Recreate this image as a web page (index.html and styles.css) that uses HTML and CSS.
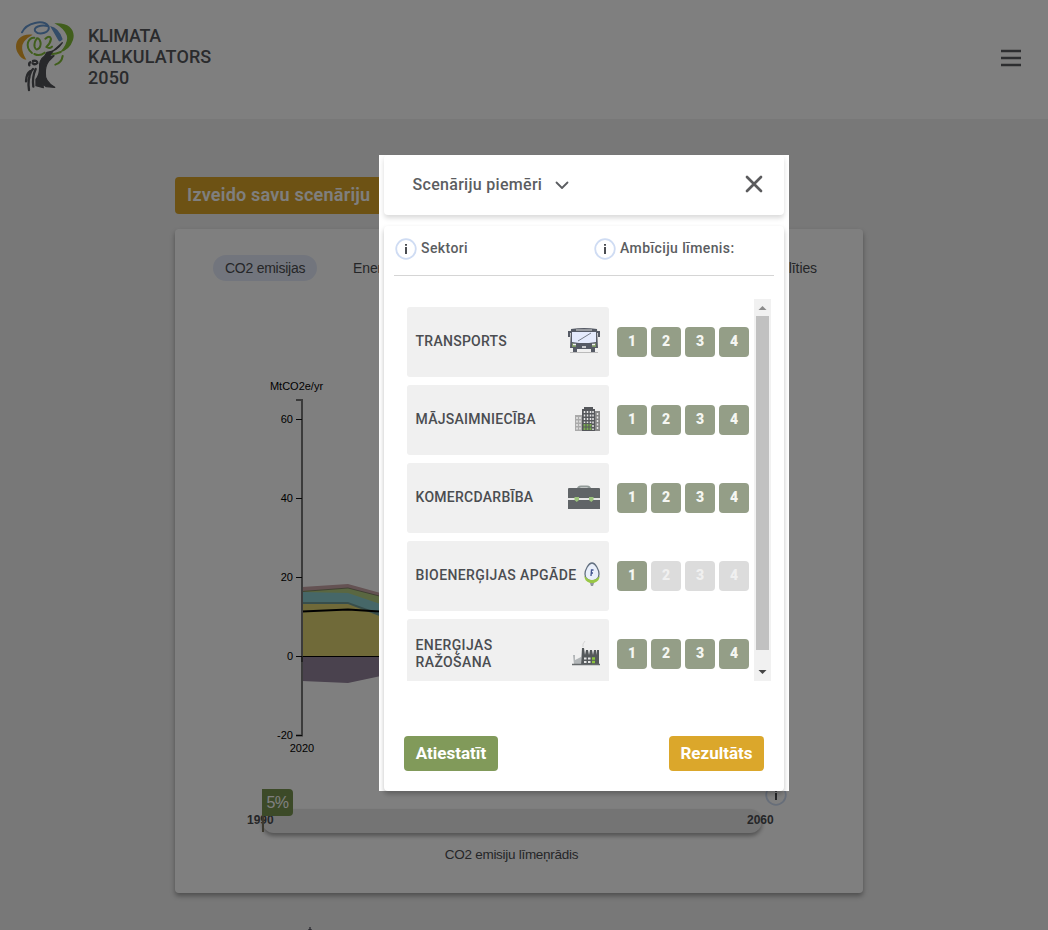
FILE: index.html
```html
<!DOCTYPE html>
<html lang="lv">
<head>
<meta charset="utf-8">
<title>Klimata kalkulators 2050</title>
<link rel="stylesheet" href="styles.css">
</head>
<body>
<svg class="defs" width="0" height="0">
  <symbol id="info" viewBox="0 0 22 22"><circle cx="11" cy="11" r="9.8" fill="#fff" stroke="#cfdcf3" stroke-width="1.8"/><path d="M11 9v7M11 6v1.8" stroke="#4b4d51" stroke-width="2"/></symbol>
</svg>
<header class="header">
  <div class="brand">
    <svg class="logo" viewBox="45 60 180 216" fill="none" stroke-linecap="round" stroke-linejoin="round">
      <path d="M66 97C80 67 130 58 145 78C154 98 118 107 106 94C98 82 122 73 143 78" stroke="#6698d1" stroke-width="6"/>
      <path d="M150 78Q178 84 188 118Q178 130 174 119Q164 102 150 78Z" fill="#6698d1"/>
      <path d="M163 70C207 66 228 91 219 120Q209 150 180 157Q207 126 200 106Q191 84 163 70Z" fill="#82bd38"/>
      <path d="M98 104C52 98 38 137 55 161Q64 178 79 179Q58 145 72 125Q82 112 98 104Z" fill="#e7a52d"/>
      <path d="M103 113Q90 112 84 127Q79 146 96 159M111 115Q101 127 104 141Q108 153 117 145Q126 134 119 120Q115 114 111 115M136 116Q150 104 153 117Q151 130 139 141Q148 147 156 140M103 162Q120 170 134 158M188 168Q185 188 166 194M182 156Q162 164 150 161" stroke="#82bd38" stroke-width="6"/>
      <path d="M187 128Q170 155 141 157L134 168Q117 180 119 203Q119 225 108 238V257L130 263L128 251L139 260L164 262Q133 243 136 220Q135 198 147 182L162 167L146 171L160 152Z" fill="#515257" stroke="#515257" stroke-width="4"/>
      <path d="M99 183Q112 180 112 189Q105 196 98 190M91 187Q86 190 88 196M99 207Q88 218 88 233M107 207Q96 232 100 260M94 212Q82 238 87 270M90 214Q79 221 78 244" stroke="#515257" stroke-width="7"/>
    </svg>
    <div class="brand-name"><span class="narrow">KLIMATA</span><br>KALKULATORS<br>2050</div>
  </div>
  <svg class="burger" viewBox="0 0 22 18"><path d="M1 2h20M1 9h20M1 16h20" stroke="#5b5d61" stroke-width="2.300"/></svg>
</header>
<main class="main">
  <button class="create">Izveido savu scenāriju</button>
  <section class="card">
    <nav class="tabs"><span class="tab active">CO2 emisijas</span><span class="tab">Enerģija</span><span class="tab last">Dalīties</span></nav>
    <svg class="chart" viewBox="260 375 510 385">
      <path d="M302 587L348 584L395 597V656H302Z" fill="#c9a5a6"/>
      <path d="M302 591L348 588L395 600V656H302Z" fill="#b4cf82"/>
      <path d="M302 592L348 593L395 609V656H302Z" fill="#8dced1"/>
      <path d="M302 602L348 602L395 619V656H302Z" fill="#719d97"/>
      <path d="M302 604L348 604L395 622V656H302Z" fill="#e0d573"/>
      <path d="M302 657H395V673L348 683L302 681Z" fill="#95849c"/>
      <path d="M302 591.5L348 588L395 600" fill="none" stroke="#665" stroke-width=".7"/>
      <path d="M302 611.5L348 609.5L395 612.5" fill="none" stroke="#000" stroke-width="2"/>
      <path d="M302 656.5H395" stroke="#000"/>
      <path d="M296 400H302V735.500H296" fill="none" stroke="#777" stroke-width="2"/>
      <path d="M296 419.500h6M296 498.500h6M296 577.500h6M296 656.500h6M296 735.500h6M302 656v6" stroke="#111"/>
      <g class="ticks"><text x="293" y="423">60</text><text x="293" y="502">40</text><text x="293" y="581">20</text><text x="293" y="660">0</text><text x="293" y="739">-20</text></g>
      <g class="labels"><text x="296.500" y="390">MtCO2e/yr</text><text x="302" y="752">2020</text></g>
    </svg>
    <div class="level">
      <svg class="level-info"><use href="#info"/></svg>
      <span class="year">1990</span>
      <div class="track"></div>
      <span class="year end">2060</span>
      <i class="needle"></i><span class="percent">5%</span>
    </div>
    <p class="caption">CO2 emisiju līmeņrādis</p>
  </section>
  <svg class="peak" viewBox="0 0 6 4"><path d="M3 0v4M1 3h4" stroke="#223" stroke-width="1"/></svg>
</main>
<div class="overlay">
  <div class="modal">
    <div class="modal-head">
      <span class="examples">Scenāriju piemēri</span>
      <svg class="chevron" viewBox="0 0 14 9"><path d="M1.500 1.500L7 7L12.500 1.500" fill="none" stroke="#5b5d61" stroke-width="1.800" stroke-linecap="round" stroke-linejoin="round"/></svg>
      <svg class="close" viewBox="0 0 18 18"><path d="M2 2L16 16M16 2L2 16" stroke="#5b5b5d" stroke-width="2.700" stroke-linecap="round"/></svg>
    </div>
    <div class="modal-body">
      <div class="columns">
        <div class="column sectors"><svg class="info"><use href="#info"/></svg><span>Sektori</span></div>
        <div class="column"><svg class="info"><use href="#info"/></svg><span>Ambīciju līmenis:</span></div>
      </div>
      <div class="scroller">
        <div class="list">
          <div class="row"><div class="sector"><span>TRANSPORTS</span>
            <svg width="32" height="26" viewBox="0 0 32 26"><path d="M3 1Q16-1 29 1L30 20H27V24H23V21H9V24H5V20H2Z" fill="#555a65"/><path d="M8 1.500H24V2.500H8Z" fill="#ddd"/><path d="M4 4H28V14L21 15H11L4 14Z" fill="#e4eafc"/><path d="M10 13L23 5" stroke="#777d89" fill="none"/><path d="M4 15L8 17V19H4ZM28 15L24 17V19H28Z" fill="#7d9865"/><path d="M5 16.500h3M24 16.500h3M14 19h4" stroke="#eee" stroke-width="1.500"/><path d="M3 4H1V9M29 4H31V9" stroke="#555a65" stroke-width="2" fill="none"/><path d="M2 24.500H30" stroke="#bbb"/></svg></div>
            <div class="levels"><b>1</b><b>2</b><b>3</b><b>4</b></div></div>
          <div class="row"><div class="sector"><span>MĀJSAIMNIECĪBA</span>
            <svg width="25" height="25" viewBox="0 0 25 25"><path d="M0 8H7V24H0Z" fill="#aaa"/><path d="M7 2H9V0H18V2H20V24H7Z" fill="#55575b"/><path d="M20 4H25V24H20Z" fill="#888"/><path d="M2 10V23M5 10V23M22.500 6V23" stroke="#e8e8e8" stroke-width="1.500" stroke-dasharray="2 1.500"/><path d="M9.500 4V16M12.500 4V16M15.500 4V16M18 4V23" stroke="#e4e4e4" stroke-width="1.500" stroke-dasharray="2 1.500"/><path d="M9.500 17V24M12.500 17V24M15.500 17V24" stroke="#7aac50" stroke-width="1.900" stroke-dasharray="2.500 1"/></svg></div>
            <div class="levels"><b>1</b><b>2</b><b>3</b><b>4</b></div></div>
          <div class="row"><div class="sector"><span>KOMERCDARBĪBA</span>
            <svg width="32" height="25" viewBox="0 0 32 25"><path d="M10 4Q10 1.500 13 1.500H19Q22 1.500 22 4" fill="none" stroke="#919a98" stroke-width="2"/><path d="M1 3H31Q32 3 32 4V13H0V4Q0 3 1 3ZM0 15H32V24H0Z" fill="#606467"/><path d="M0 14H32" stroke="#ddd"/><path d="M6.500 12H11V15L8.750 17L6.500 15ZM21 12H25.500V15L23.250 17L21 15Z" fill="#9cc37d"/></svg></div>
            <div class="levels"><b>1</b><b>2</b><b>3</b><b>4</b></div></div>
          <div class="row"><div class="sector"><span class="wide">BIOENERĢIJAS APGĀDE</span>
            <svg class="drop" width="16" height="26" viewBox="0 0 16 26"><path d="M8 1C4.500 1 1 8 1 12C1 16 4 19 8 19S15 16 15 12C15 8 11.500 1 8 1Z" fill="#e9effa" stroke="#637080" stroke-width="1.300"/><path d="M.5 14Q4 18 8 18T15.500 14Q16 19 10 21H6Q0 19 .5 14Z" fill="#99c746"/><path d="M6 21H10L9 24H7Z" fill="#90979a"/><path d="M9.500 8H7.500L7 14M7 11H9" stroke="#42548e" stroke-width="1.300" fill="none"/></svg></div>
            <div class="levels disabled"><b>1</b><b>2</b><b>3</b><b>4</b></div></div>
          <div class="row"><div class="sector last-sector"><span class="wide">ENERĢIJAS<br>RAŽOŠANA</span>
            <svg width="28" height="25" viewBox="0 0 28 25"><path d="M1 14H3V19L9 16V24H2Z" fill="#b2b6b8"/><path d="M9 24L10 7H12L13 14L14 9H16L17 14L18 9H20L21 14L22 9H24L25 14L25 9H27L27 24Z" fill="#55595b"/><path d="M11 6Q10 3 13 0" fill="none" stroke="#d4d4d4"/><path d="M12 17.500h7M12 21h7" stroke="#e5e5e5" stroke-width="2.200" stroke-dasharray="2.500 1.500"/><path d="M20 17.500h3M20 21h3" stroke="#8bc43d" stroke-width="2.500"/><path d="M0 23.500H28" stroke="#666a6c" stroke-width="1.500"/></svg></div>
            <div class="levels"><b>1</b><b>2</b><b>3</b><b>4</b></div></div>
        </div>
        <div class="bar">
          <svg class="arrow" viewBox="0 0 17 17"><path d="M4.500 11L8.500 7L12.500 11Z" fill="#8b8b8b"/></svg>
          <div class="thumb"></div>
          <svg class="arrow down" viewBox="0 0 17 17"><path d="M4.500 6L8.500 10L12.500 6Z" fill="#444"/></svg>
        </div>
      </div>
      <div class="actions"><button class="reset">Atiestatīt</button><button class="result">Rezultāts</button></div>
    </div>
  </div>
</div>
</body>
</html>
```
FILE: styles.css
```css
* { box-sizing: border-box; }
html, body { margin: 0; height: 930px; overflow: hidden; }
body { background: #f0f0f0; font-family: Roboto, sans-serif; color: #4b4d51; }
.defs { display: block; width: 0; height: 0; }
svg { flex: none; }
button { border: 0; padding: 0 0 2px; border-radius: 4px; color: #fff; font: 700 17px Roboto, sans-serif; white-space: nowrap; }
.header { height: 119px; background: #fff; display: flex; justify-content: space-between; align-items: flex-start; padding: 20px 26px 0 15px; }
.brand { display: flex; gap: 13px; color: #55575b; }
.logo { width: 60px; height: 72px; }
.brand-name { font-size: 18px; line-height: 21px; font-weight: 500; letter-spacing: .1px; padding-top: 5px; }
.narrow { letter-spacing: -.3px; }
.burger { width: 22px; height: 18px; margin-top: 29px; }
.main { width: 688px; margin: 0 auto 0 175px; padding-top: 58px; }
.create { display: block; width: 270px; height: 37px; background: #daa529; text-align: left; padding-left: 12px; font-size: 18px; font-weight: 600; letter-spacing: .22px; }
.card { height: 664px; margin-top: 15px; background: #fff; border-radius: 4px; box-shadow: 0 3px 5px rgba(0,0,0,.35); padding: 26px 38px 0; font-family: "Liberation Sans", sans-serif; }
.tabs { display: flex; gap: 24px; height: 26px; font-size: 14px; line-height: 26px; padding-right: 8px; white-space: nowrap; }
.tab { padding: 0 12px; letter-spacing: -.1px; }
.tab.active { background: #e5ebfa; border-radius: 13px; width: 104px; letter-spacing: -.25px; }
.tab.last { margin-left: auto; padding: 0; }
.chart { display: block; width: 510px; height: 385px; margin: 94px 0 0 47px; }
.ticks { font-size: 11px; text-anchor: end; fill: #000; }
.labels { font-size: 11px; text-anchor: middle; fill: #000; }
.level { position: relative; height: 60px; margin: 24px 0 0 49px; width: 530px; display: flex; padding-top: 25px; }
.track { height: 24px; width: 500px; background: #e9e9e9; border-radius: 12px; box-shadow: 0 3px 4px rgba(0,0,0,.35); }
.year { position: absolute; left: -15px; top: 29px; font-size: 12px; font-weight: 700; line-height: 14px; }
.year.end { left: 485px; }
.percent { position: absolute; left: 0; top: 5px; width: 31px; height: 27px; border-radius: 0 4px 4px 0; background: #789450; color: #fff; font-size: 16px; line-height: 27px; text-align: center; letter-spacing: -.5px; }
.needle { position: absolute; left: 0; top: 30px; width: 2px; height: 18px; background: #79735d; }
.level-info { position: absolute; left: 503px; top: 0; width: 22px; height: 22px; }
.caption { margin: 3px 0 0; text-align: center; padding-right: 15px; font-size: 13.5px; line-height: 16px; letter-spacing: -.28px; }
.peak { display: block; width: 6px; height: 4px; margin: 34px 0 0 132px; }
.overlay { position: fixed; inset: 0; background: rgba(0,0,0,.5); padding: 155px 0 0 379px; }
.modal { width: 410px; height: 636px; background: #fff; padding: 0 5px; }
.modal-head { height: 60px; display: flex; align-items: center; border-radius: 4px; box-shadow: 0 3px 5px rgba(0,0,0,.15); padding: 0 21px 2px 28.5px; color: #5b5d61; }
.examples { font-weight: 500; font-size: 16px; letter-spacing: .3px; padding-top: 1px; }
.chevron { width: 14px; height: 9px; margin-left: 13px; margin-top: 3px; }
.close { width: 18px; height: 18px; margin-left: auto; }
.modal-body { height: 565px; margin-top: 11px; border-radius: 4px; box-shadow: 0 3px 5px rgba(0,0,0,.25); padding: 0 10px; }
.columns { height: 50px; border-bottom: 1px solid #d5d5d5; display: flex; padding: 12px 0 0 1px; }
.column { display: flex; gap: 4px; height: 22px; align-items: center; color: #5b5d61; font-size: 14px; font-weight: 500; letter-spacing: .4px; line-height: 16px; }
.column span { padding-bottom: 2px; }
.sectors { width: 199px; }
.info { width: 22px; height: 22px; }
.scroller { height: 382px; display: flex; justify-content: space-between; margin: 23px 3px 0 0; overflow: hidden; }
.list { padding: 8px 0 0 13px; display: flex; flex-direction: column; gap: 8px; }
.row { height: 70px; flex: none; display: flex; gap: 8px; align-items: center; }
.sector { width: 202px; height: 70px; border-radius: 3px; background: #f0f0f0; display: flex; align-items: center; justify-content: space-between; padding: 0 9px 2px 8.5px; font-weight: 500; font-size: 14px; line-height: 17px; white-space: nowrap; letter-spacing: .27px; }
.sector span { padding-top: 1px; }
.wide { letter-spacing: .4px; }
.drop { margin-left: -2px; }
.sector.last-sector span { padding-top: 2px; }
.levels { display: flex; gap: 4px; }
.levels b { width: 30px; height: 30px; border-radius: 4px; background: #949e87; color: #f5f6f2; text-align: center; font-size: 14px; line-height: 29px; font-weight: 900; }
.disabled b + b { background: #dcdcdc; color: #f0f0f0; }
.bar { width: 17px; height: 382px; background: #f1f1f1; display: flex; flex-direction: column; align-items: center; }
.arrow { width: 17px; height: 17px; }
.thumb { width: 13px; height: 334px; background: #c1c1c1; }
.down { margin-top: auto; }
.actions { display: flex; justify-content: space-between; margin: 55px 10px 0; }
.reset { width: 94px; height: 35px; background: #819a5a; }
.result { width: 95px; height: 35px; background: #dba72b; }
```
